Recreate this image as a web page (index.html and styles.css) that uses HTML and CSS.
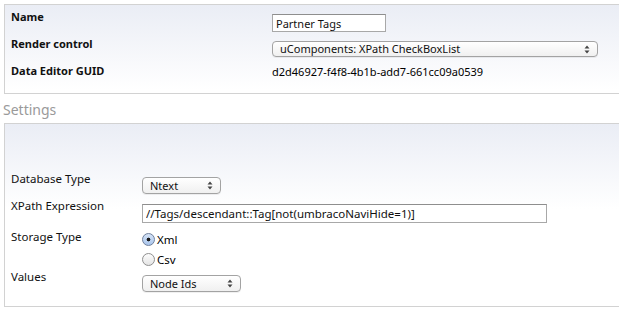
FILE: index.html
```html
<!DOCTYPE html>
<html lang="en">
<head>
    <meta charset="UTF-8">
    <meta name="viewport" content="width=device-width, initial-scale=1.0">
    <title>Edit Data Type</title>
    <link rel="stylesheet" href="styles.css">
</head>
<body>

<div class="panel panel-top">
    <div class="row row-top">
        <label class="names bold" for="name">Name</label>
        <input type="text" id="name" class="text name-input" value="Partner Tags">
    </div>
    <div class="row row-top">
        <label class="names bold">Render control</label>
        <div class="select wide">
            <span>uComponents: XPath CheckBoxList</span>
            <svg class="arrows" width="6" height="9" viewBox="0 0 6 9"><path d="M3 0.5 L5.5 3.5 L0.5 3.5 Z M3 8.5 L5.5 5.5 L0.5 5.5 Z" fill="#444"/></svg>
        </div>
    </div>
    <div class="row row-top">
        <label class="names bold">Data Editor GUID</label>
        <span class="value">d2d46927-f4f8-4b1b-add7-661cc09a0539</span>
    </div>
</div>

<h2 class="heading">Settings</h2>

<div class="panel panel-settings">
    <div class="row row-a">
        <label class="names">Database Type</label>
        <div class="select small">
            <span>Ntext</span>
            <svg class="arrows" width="6" height="9" viewBox="0 0 6 9"><path d="M3 0.5 L5.5 3.5 L0.5 3.5 Z M3 8.5 L5.5 5.5 L0.5 5.5 Z" fill="#444"/></svg>
        </div>
    </div>
    <div class="row row-b">
        <label class="names" for="xpath">XPath Expression</label>
        <input type="text" id="xpath" class="text xpath-input" value="//Tags/descendant::Tag[not(umbracoNaviHide=1)]">
    </div>
    <div class="row row-c">
        <label class="names">Storage Type</label>
        <div class="radios">
            <div class="radio-item"><span class="radio checked"></span>Xml</div>
            <div class="radio-item"><span class="radio"></span>Csv</div>
        </div>
    </div>
    <div class="row row-d">
        <label class="names">Values</label>
        <div class="select medium">
            <span>Node Ids</span>
            <svg class="arrows" width="6" height="9" viewBox="0 0 6 9"><path d="M3 0.5 L5.5 3.5 L0.5 3.5 Z M3 8.5 L5.5 5.5 L0.5 5.5 Z" fill="#444"/></svg>
        </div>
    </div>
</div>

</body>
</html>
```

FILE: styles.css
```css
/* Reset */
* {
  box-sizing: border-box;
  margin: 0;
  padding: 0;
}

body {
  font-family: 'Noto Sans', 'DejaVu Sans', sans-serif;
  font-size: 11px;
  line-height: 16px;
  color: #000;
  background: #fff;
  padding: 4px 0 0 4px;
  overflow: hidden;
}

/* Panels (they run on past the right edge of the window) */
.panel {
  border: 1px solid #d2d2d2;
  border-right: none;
  background: linear-gradient(to bottom, #eaedf5 0, #fff 85px) no-repeat #fff;
}

.panel-top {
  padding: 4px 0 3px 6px;
}

.panel-settings {
  padding: 47px 0 0 6px;
  height: 184px;
}

/* Rows */
.row {
  display: grid;
  align-items: start;
}

.row-top {
  grid-template-columns: 261px 1fr;
  height: 27px;
}

.row-a { grid-template-columns: 131px 1fr; height: 27px; }
.row-b { grid-template-columns: 131px 1fr; height: 31px; }
.row-c { grid-template-columns: 131px 1fr; height: 40px; }
.row-d { grid-template-columns: 131px 1fr; height: 37px; }

.names {
  color: #111;
}

.panel-settings .names {
  font-size: 11.5px;
}

.bold {
  font-weight: bold;
}

.value {
  padding-top: 1px;
}

/* Heading */
.heading {
  font-size: 14px;
  line-height: 18px;
  font-weight: normal;
  color: #9a9a9a;
  margin: 7px 0 4px -1px;
}

/* Text inputs */
input.text {
  font-family: inherit;
  font-size: 11px;
  color: #111;
  border: 1px solid #a8a8a8;
  border-top-color: #8e8e8e;
  background: #fff;
  padding: 0 3px;
  outline: none;
}

.name-input {
  width: 114px;
  height: 18px;
  margin-top: 5px;
}

.xpath-input {
  width: 405px;
  height: 19px;
  margin-top: 6px;
  font-size: 11.5px !important;
}

/* Selects */
.select {
  display: flex;
  align-items: center;
  justify-content: space-between;
  border: 1px solid #a3a3a3;
  border-radius: 4px;
  background: linear-gradient(to bottom, #ffffff, #f0f0f0);
  box-shadow: 0 1px 0 rgba(0, 0, 0, 0.06);
  padding: 0 7px;
  color: #111;
  margin-top: 6px;
  height: 17px;
}

.select.wide {
  width: 326px;
  height: 16px;
  margin-top: 5px;
}

.select.small {
  width: 79px;
}

.select.medium {
  width: 99px;
}

.arrows {
  flex: none;
}

/* Radios */
.radios {
  padding-top: 4px;
  font-size: 11.5px;
}

.radio-item {
  display: flex;
  align-items: center;
  height: 13px;
  margin-bottom: 7px;
  line-height: 13px;
}

.radio {
  display: inline-block;
  width: 13px;
  height: 13px;
  border-radius: 50%;
  border: 1px solid #8f8f8f;
  background: linear-gradient(to bottom, #fdfdfd, #e4e4e4);
  margin-right: 2px;
}

.radio.checked {
  border-color: #6f7f9c;
  background: radial-gradient(circle at 50% 50%, #1a1a1a 0, #1a1a1a 1.6px, transparent 2.2px),
              linear-gradient(to bottom, #d6e4f7, #a9c5ec);
}
```
